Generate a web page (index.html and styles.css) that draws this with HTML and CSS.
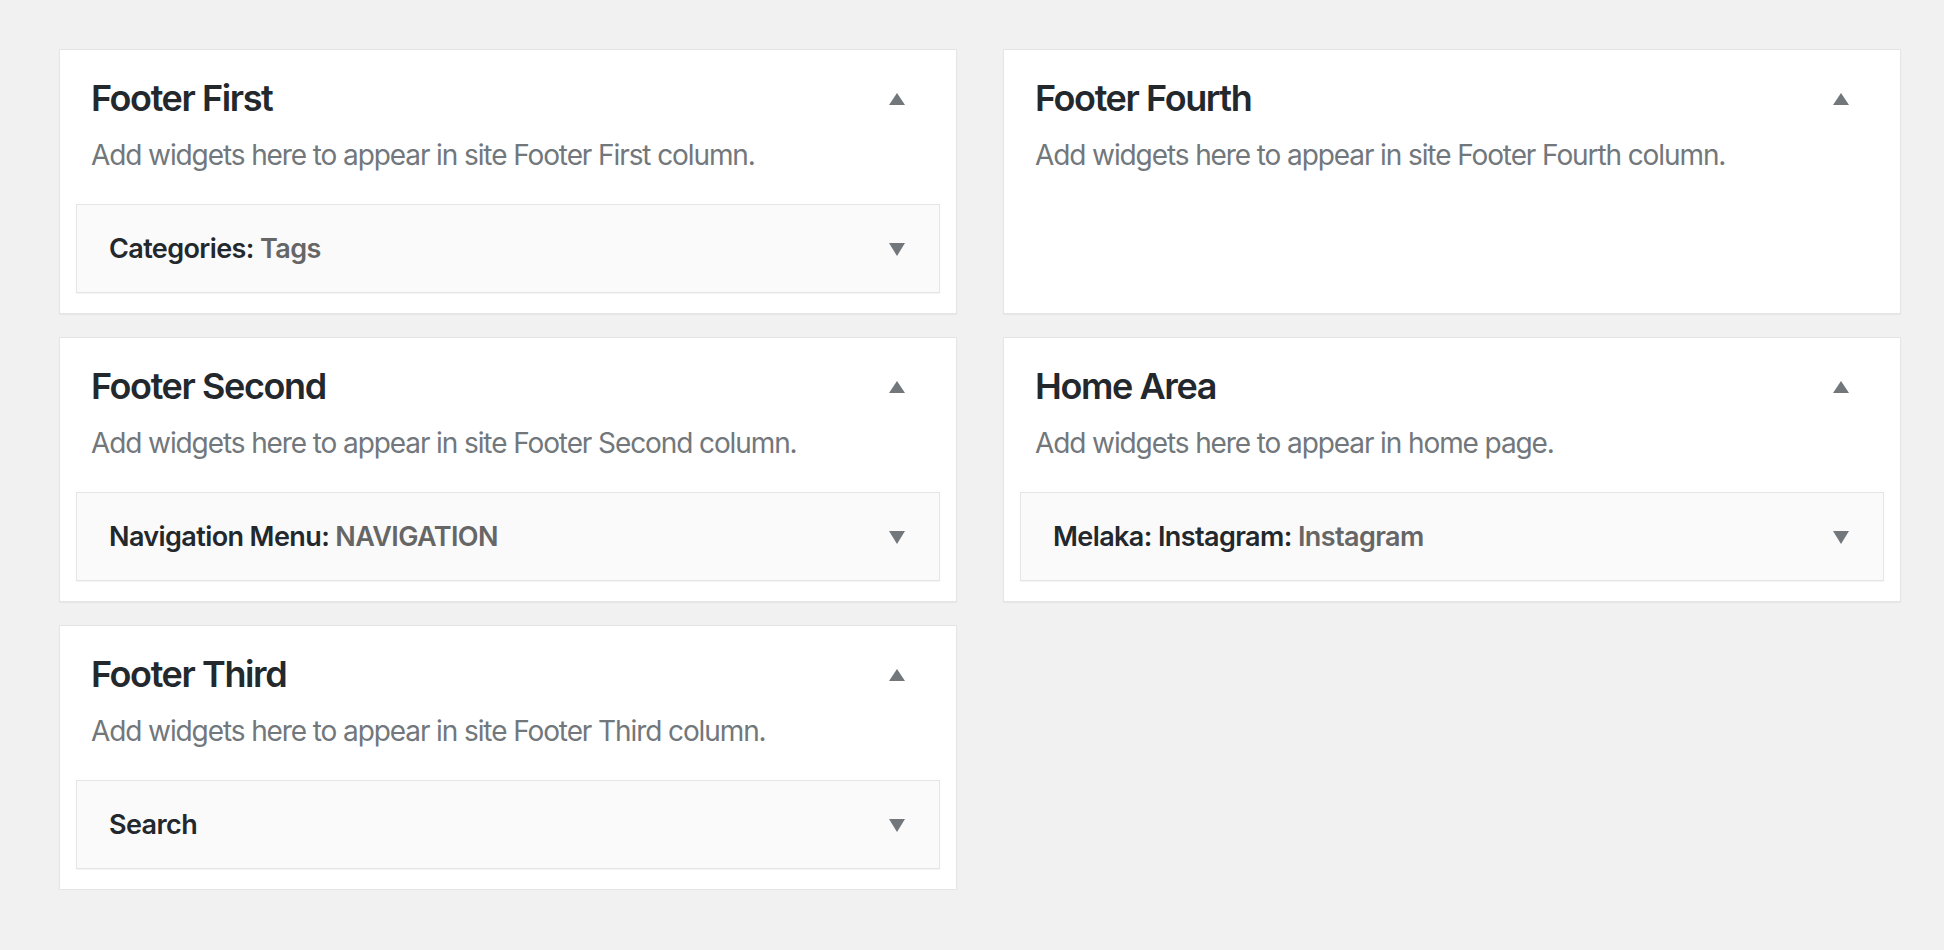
FILE: index.html
```html
<!DOCTYPE html>
<html lang="en">
<head>
<meta charset="utf-8">
<title>Widgets</title>
<link rel="stylesheet" href="styles.css">
</head>
<body>
<div class="sidebars">
  <section class="sidebar">
    <div class="sidebar-head">
      <h2 class="sidebar-name">Footer First</h2>
      <svg class="toggle" viewBox="0 0 16 12" width="16" height="12"><polygon points="8,0 16,12 0,12"/></svg>
    </div>
    <p class="sidebar-desc">Add widgets here to appear in site Footer First column.</p>
    <div class="widget">
      <h3 class="widget-title">Categories:<span class="in-title"> Tags</span></h3>
      <svg class="toggle" viewBox="0 0 16 13" width="16" height="13"><polygon points="0,0 16,0 8,13"/></svg>
    </div>
  </section>

  <section class="sidebar">
    <div class="sidebar-head">
      <h2 class="sidebar-name">Footer Fourth</h2>
      <svg class="toggle" viewBox="0 0 16 12" width="16" height="12"><polygon points="8,0 16,12 0,12"/></svg>
    </div>
    <p class="sidebar-desc">Add widgets here to appear in site Footer Fourth column.</p>
  </section>

  <section class="sidebar">
    <div class="sidebar-head">
      <h2 class="sidebar-name">Footer Second</h2>
      <svg class="toggle" viewBox="0 0 16 12" width="16" height="12"><polygon points="8,0 16,12 0,12"/></svg>
    </div>
    <p class="sidebar-desc">Add widgets here to appear in site Footer Second column.</p>
    <div class="widget">
      <h3 class="widget-title">Navigation Menu:<span class="in-title"> NAVIGATION</span></h3>
      <svg class="toggle" viewBox="0 0 16 13" width="16" height="13"><polygon points="0,0 16,0 8,13"/></svg>
    </div>
  </section>

  <section class="sidebar">
    <div class="sidebar-head">
      <h2 class="sidebar-name">Home Area</h2>
      <svg class="toggle" viewBox="0 0 16 12" width="16" height="12"><polygon points="8,0 16,12 0,12"/></svg>
    </div>
    <p class="sidebar-desc">Add widgets here to appear in home page.</p>
    <div class="widget">
      <h3 class="widget-title">Melaka: Instagram:<span class="in-title"> Instagram</span></h3>
      <svg class="toggle" viewBox="0 0 16 13" width="16" height="13"><polygon points="0,0 16,0 8,13"/></svg>
    </div>
  </section>

  <section class="sidebar">
    <div class="sidebar-head">
      <h2 class="sidebar-name">Footer Third</h2>
      <svg class="toggle" viewBox="0 0 16 12" width="16" height="12"><polygon points="8,0 16,12 0,12"/></svg>
    </div>
    <p class="sidebar-desc">Add widgets here to appear in site Footer Third column.</p>
    <div class="widget">
      <h3 class="widget-title">Search</h3>
      <svg class="toggle" viewBox="0 0 16 13" width="16" height="13"><polygon points="0,0 16,0 8,13"/></svg>
    </div>
  </section>
</div>
</body>
</html>
```

FILE: styles.css
```css
html, body {
  margin: 0;
  padding: 0;
  background: #f1f1f1;
}

body {
  font-family: Inter, "Noto Sans", sans-serif;
  color: #23282d;
}

.sidebars {
  display: grid;
  grid-template-columns: 898px 898px;
  column-gap: 46px;
  row-gap: 23px;
  padding: 49px 0 0 59px;
}

.sidebar {
  box-sizing: border-box;
  height: 265px;
  background: #fff;
  border: 1px solid #e5e5e5;
  box-shadow: 0 1px 1px rgba(0, 0, 0, 0.04);
  padding: 26px 16px 0 16px;
}

.sidebar-head {
  display: flex;
  align-items: flex-start;
  justify-content: space-between;
  padding: 0 35px 0 15px;
}

.sidebar-name {
  margin: 0;
  font-size: 36px;
  line-height: 44px;
  font-weight: 600;
  letter-spacing: -1.4px;
  color: #23282d;
}

.sidebar-head .toggle {
  margin-top: 17px;
}

.toggle {
  fill: #72777c;
  flex: none;
}

.sidebar-desc {
  margin: 15px 0 0 15px;
  font-size: 28px;
  line-height: 40px;
  letter-spacing: -1.1px;
  color: #72777c;
}

.widget {
  margin-top: 29px;
  display: flex;
  align-items: center;
  justify-content: space-between;
  background: #fafafa;
  border: 1px solid #e5e5e5;
  box-shadow: 0 1px 1px rgba(0, 0, 0, 0.04);
  padding: 26px 34px 25px 32px;
}

.widget .toggle {
  margin-top: 1px;
}

.widget-title {
  margin: 0;
  font-size: 27px;
  line-height: 36px;
  font-weight: 600;
  letter-spacing: -0.6px;
  color: #23282d;
}

.in-title {
  color: #666;
}
```
